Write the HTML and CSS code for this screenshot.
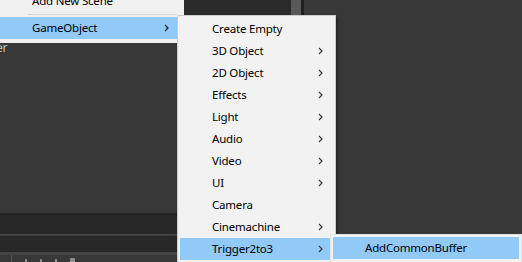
FILE: index.html
```html
<!DOCTYPE html>
<html lang="en">
<head>
  <meta charset="UTF-8" />
  <meta name="viewport" content="width=device-width, initial-scale=1" />
  <title>GameObject menu</title>
  <link rel="stylesheet" href="styles.css">
</head>
<body>
  <div class="editor">
    <div class="hierarchy">
      <div class="hierarchy-top"></div>
      <div class="hierarchy-body">
        <div class="tab-label">er</div>
      </div>
      <div class="band-line"></div>
      <div class="band band-tall"></div>
      <div class="band-light"></div>
      <div class="band-line thin"></div>
      <div class="band band-short"></div>
      <div class="band-light thick"></div>
      <div class="toolbar">
        <span class="tool-sep"></span>
        <span class="tool-dot"></span>
        <span class="tool-dot"></span>
        <span class="tool-dot"></span>
        <span class="tool-dot wide"></span>
      </div>
    </div>
    <div class="scrollbar"><div class="thumb"></div></div>
    <div class="divider"></div>
    <div class="scene"></div>
  </div>

  <!-- context menu, first level -->
  <div class="menu menu-root">
    <div class="item"><span class="label">Add New Scene</span></div>
    <div class="separator"></div>
    <div class="item active">
      <span class="label">GameObject</span>
      <svg class="chevron" width="5" height="8" viewBox="0 0 5 8"><polyline points="1,1 4,4 1,7" /></svg>
    </div>
  </div>

  <!-- GameObject submenu -->
  <div class="menu menu-sub">
    <div class="item"><span class="label">Create Empty</span></div>
    <div class="item"><span class="label">3D Object</span><svg class="chevron" width="5" height="8" viewBox="0 0 5 8"><polyline points="1,1 4,4 1,7" /></svg></div>
    <div class="item"><span class="label">2D Object</span><svg class="chevron" width="5" height="8" viewBox="0 0 5 8"><polyline points="1,1 4,4 1,7" /></svg></div>
    <div class="item"><span class="label">Effects</span><svg class="chevron" width="5" height="8" viewBox="0 0 5 8"><polyline points="1,1 4,4 1,7" /></svg></div>
    <div class="item"><span class="label">Light</span><svg class="chevron" width="5" height="8" viewBox="0 0 5 8"><polyline points="1,1 4,4 1,7" /></svg></div>
    <div class="item"><span class="label">Audio</span><svg class="chevron" width="5" height="8" viewBox="0 0 5 8"><polyline points="1,1 4,4 1,7" /></svg></div>
    <div class="item"><span class="label">Video</span><svg class="chevron" width="5" height="8" viewBox="0 0 5 8"><polyline points="1,1 4,4 1,7" /></svg></div>
    <div class="item"><span class="label">UI</span><svg class="chevron" width="5" height="8" viewBox="0 0 5 8"><polyline points="1,1 4,4 1,7" /></svg></div>
    <div class="item"><span class="label">Camera</span></div>
    <div class="item"><span class="label">Cinemachine</span><svg class="chevron" width="5" height="8" viewBox="0 0 5 8"><polyline points="1,1 4,4 1,7" /></svg></div>
    <div class="item active"><span class="label">Trigger2to3</span><svg class="chevron" width="5" height="8" viewBox="0 0 5 8"><polyline points="1,1 4,4 1,7" /></svg></div>
  </div>

  <!-- Trigger2to3 submenu -->
  <div class="menu menu-leaf">
    <div class="item active"><span class="label">AddCommonBuffer</span></div>
  </div>
</body>
</html>
```

FILE: styles.css
```css
:root {
  --panel: #383838;
  --panel-dark: #282828;
  --line: #1f1f1f;
  --menu-bg: #f2f2f2;
  --menu-border: #cccccc;
  --hover: #91c9f7;
  --text: #000000;
}

* {
  box-sizing: border-box;
  margin: 0;
  padding: 0;
}

body {
  width: 522px;
  height: 262px;
  overflow: hidden;
  background: var(--panel);
  font-family: 'Noto Sans', sans-serif;
  font-size: 11.5px;
  letter-spacing: -0.2px;
  position: relative;
}

.editor {
  display: grid;
  grid-template-columns: 291px 10px 3px 1fr;
  height: 262px;
}

.hierarchy {
  display: flex;
  flex-direction: column;
  background: var(--panel);
}

.hierarchy-top {
  height: 15px;
  background: #2a2a2a;
}

.hierarchy-body {
  flex: 1;
  padding-top: 27px;
}

.tab-label {
  color: #c2c2c2;
  font-size: 12px;
  line-height: 12px;
  margin-left: -4px;
}

.band-line {
  height: 2px;
  background: #222222;
}

.band-line.thin {
  height: 1px;
}

.band {
  background: var(--panel-dark);
}

.band-tall {
  height: 19px;
}

.band-short {
  height: 15px;
}

.band-light {
  height: 2px;
  background: #444444;
}

.band-light.thick {
  height: 3px;
}

.toolbar {
  height: 7px;
  display: flex;
  align-items: flex-end;
  gap: 13px;
  padding-left: 11px;
}

.tool-sep {
  width: 1px;
  height: 7px;
  background: #555555;
}

.tool-dot {
  width: 2px;
  height: 3px;
  background: #8a8a8a;
}

.tool-dot.wide {
  width: 5px;
  height: 4px;
}

.scrollbar {
  background: #2a2a2a;
}

.thumb {
  height: 15px;
  background: #595959;
}

.divider {
  background: var(--line);
}

.scene {
  background: var(--panel);
}

/* menus */

.menu {
  position: absolute;
  background: var(--menu-bg);
  color: var(--text);
}

.item {
  height: 22px;
  display: flex;
  align-items: center;
  justify-content: space-between;
  padding-left: 32px;
  padding-right: 7px;
}

.item.active {
  background: var(--hover);
}

.label {
  line-height: 22px;
  white-space: nowrap;
}

.chevron {
  flex: none;
}

.chevron polyline {
  fill: none;
  stroke: #3a3a3a;
  stroke-width: 1.2;
}

.menu-root {
  left: 0;
  top: -10px;
  width: 184px;
  height: 53px;
  background: #f0f0f0;
  padding-right: 7px;
}

.menu-root .item {
  width: 177px;
  padding-right: 8px;
}

.menu-root .chevron polyline {
  stroke: #202020;
}

.separator {
  height: 5px;
  margin-left: 28px;
  padding-top: 2px;
}

.separator::before {
  content: "";
  display: block;
  height: 1px;
  background: #d7d7d7;
}

.menu-sub {
  left: 177px;
  top: 15px;
  width: 159px;
  height: 260px;
  border: 1px solid var(--menu-border);
  padding: 2px 5px 2px 2px;
  box-shadow: 2px 2px 3px rgba(0, 0, 0, 0.35);
}

.menu-leaf {
  left: 330px;
  top: 234px;
  width: 192px;
  height: 40px;
  border: 1px solid #e3e3e3;
  padding: 2px 2px 2px 2px;
}
```
